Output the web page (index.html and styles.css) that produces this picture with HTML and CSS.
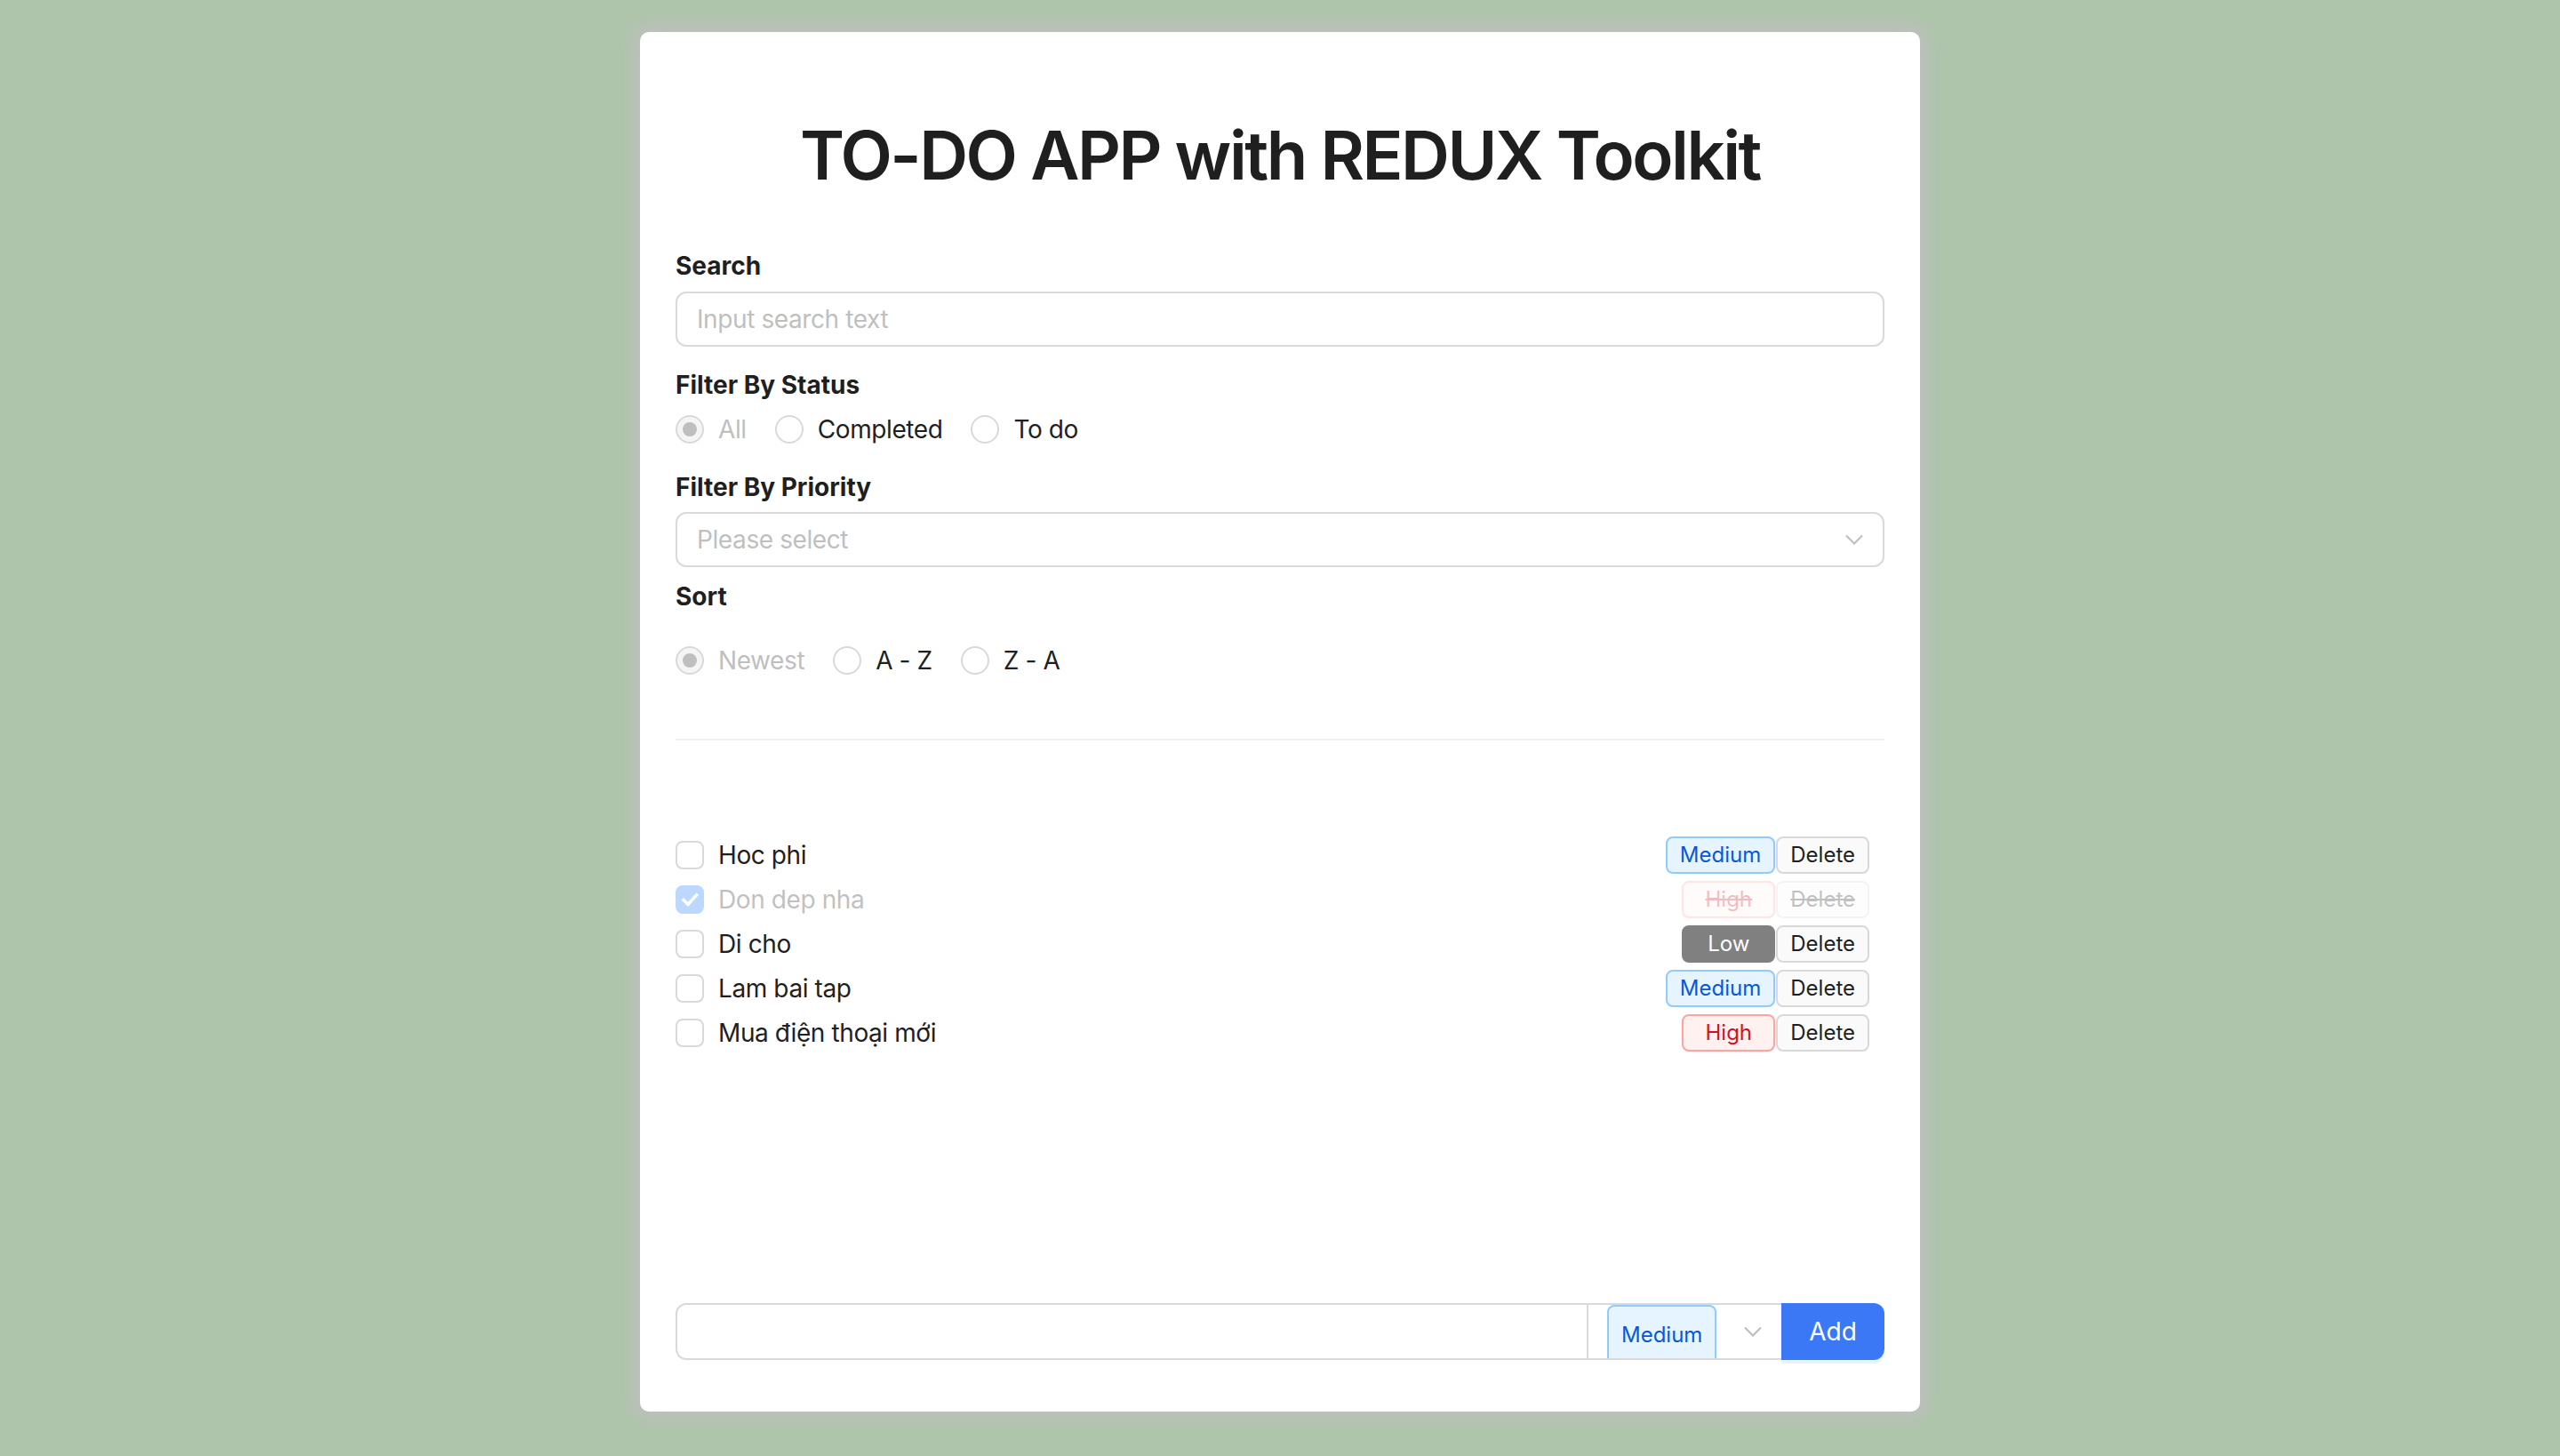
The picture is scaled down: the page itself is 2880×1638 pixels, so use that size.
FILE: index.html
```html
<!DOCTYPE html>
<html lang="vi">
<head>
<meta charset="utf-8">
<title>TO-DO APP with REDUX Toolkit</title>
<link rel="stylesheet" href="styles.css">
</head>
<body>
<main class="card">
  <h1 class="title">TO-DO APP with REDUX Toolkit</h1>

  <p class="label label-first">Search</p>
  <div class="field"><span class="placeholder">Input search text</span></div>

  <p class="label">Filter By Status</p>
  <div class="radio-group">
    <label class="radio disabled checked"><span class="radio-circle"></span><span class="radio-text">All</span></label>
    <label class="radio"><span class="radio-circle"></span><span class="radio-text">Completed</span></label>
    <label class="radio"><span class="radio-circle"></span><span class="radio-text">To do</span></label>
  </div>

  <p class="label">Filter By Priority</p>
  <div class="field field-select">
    <span class="placeholder">Please select</span>
    <svg class="chevron" width="20" height="12" viewBox="0 0 20 12"><path d="M1 1.5 L10 10.5 L19 1.5" fill="none" stroke="#bfbfbf" stroke-width="2.2"/></svg>
  </div>

  <p class="label label-sort">Sort</p>
  <div class="radio-group radio-group-sort">
    <label class="radio disabled checked"><span class="radio-circle"></span><span class="radio-text">Newest</span></label>
    <label class="radio"><span class="radio-circle"></span><span class="radio-text">A - Z</span></label>
    <label class="radio"><span class="radio-circle"></span><span class="radio-text">Z - A</span></label>
  </div>

  <div class="divider"></div>

  <ul class="todo-list">
    <li class="todo">
      <label class="checkbox"><span class="box"></span><span class="todo-text">Hoc phi</span></label>
      <div class="todo-tags"><span class="tag tag-priority tag-medium">Medium</span><span class="tag tag-delete">Delete</span></div>
    </li>
    <li class="todo done">
      <label class="checkbox checked"><span class="box"><svg width="28" height="28" viewBox="0 0 28 28"><path d="M7 14.5 L12 19.5 L21.5 9" fill="none" stroke="#fff" stroke-width="3.6" stroke-linecap="square"/></svg></span><span class="todo-text">Don dep nha</span></label>
      <div class="todo-tags"><span class="tag tag-priority tag-high">High</span><span class="tag tag-delete">Delete</span></div>
    </li>
    <li class="todo">
      <label class="checkbox"><span class="box"></span><span class="todo-text">Di cho</span></label>
      <div class="todo-tags"><span class="tag tag-priority tag-low">Low</span><span class="tag tag-delete">Delete</span></div>
    </li>
    <li class="todo">
      <label class="checkbox"><span class="box"></span><span class="todo-text">Lam bai tap</span></label>
      <div class="todo-tags"><span class="tag tag-priority tag-medium">Medium</span><span class="tag tag-delete">Delete</span></div>
    </li>
    <li class="todo">
      <label class="checkbox"><span class="box"></span><span class="todo-text">Mua điện thoại mới</span></label>
      <div class="todo-tags"><span class="tag tag-priority tag-high">High</span><span class="tag tag-delete">Delete</span></div>
    </li>
  </ul>

  <div class="add-group">
    <div class="add-input"></div>
    <div class="add-select">
      <span class="tag tag-medium add-tag">Medium</span>
      <svg class="chevron add-chevron" width="20" height="12" viewBox="0 0 20 12"><path d="M1 1.5 L10 10.5 L19 1.5" fill="none" stroke="#bfbfbf" stroke-width="2.2"/></svg>
    </div>
    <button class="add-button" type="button">Add</button>
  </div>
</main>
</body>
</html>
```
FILE: styles.css
```css
* {
  box-sizing: border-box;
}

html,
body {
  margin: 0;
}

body {
  height: 1638px;
  padding-top: 36px;
  overflow: hidden;
  background: #aec5ab;
  font-family: Inter, "Noto Sans", "Liberation Sans", sans-serif;
  font-size: 28px;
  letter-spacing: -0.4px;
  color: #1f1f1f;
}

.card {
  width: 1440px;
  height: 1552px;
  margin: 0 auto;
  padding: 40px;
  display: flex;
  flex-direction: column;
  background: #ffffff;
  border-radius: 10px;
  box-shadow: 0 0 20px 8px #bfbfbf;
}

.title {
  margin: 52px 0 0;
  font-size: 76px;
  line-height: 92px;
  font-weight: 600;
  text-align: center;
  letter-spacing: -2.5px;
  color: #1f1f1f;
}

.label {
  margin: 21px 0 0;
  font-weight: 700;
  line-height: 44px;
  letter-spacing: 0;
}

.label-first {
  margin-top: 57px;
}

.label-sort {
  margin-top: 11px;
}

.field {
  margin-top: 6px;
  height: 62px;
  padding: 0 22px;
  display: flex;
  align-items: center;
  border: 2px solid #d9d9d9;
  border-radius: 12px;
}

.label-first + .field {
  margin-top: 7px;
}

.field-select {
  justify-content: space-between;
}

.placeholder {
  color: #bfbfbf;
}

.radio-group {
  margin-top: 6px;
  height: 44px;
  display: flex;
  align-items: center;
}

.radio-group-sort {
  margin-top: 28px;
}

.radio {
  display: flex;
  align-items: center;
  margin-right: 16px;
}

.radio-circle {
  width: 32px;
  height: 32px;
  display: flex;
  align-items: center;
  justify-content: center;
  border: 2px solid #d9d9d9;
  border-radius: 50%;
  background: #ffffff;
}

.radio.disabled .radio-circle {
  background: #f5f5f5;
}

.radio.checked .radio-circle::after {
  content: "";
  width: 16px;
  height: 16px;
  border-radius: 50%;
  background: #bfbfbf;
}

.radio-text {
  padding: 0 16px;
}

.radio.disabled .radio-text {
  color: #bfbfbf;
}

.divider {
  margin-top: 66px;
  height: 2px;
  background: #f0f0f0;
}

.todo-list {
  margin: 107px 0 0;
  padding: 0;
  list-style: none;
}

.todo {
  height: 44px;
  margin-bottom: 6px;
  display: flex;
  align-items: center;
  justify-content: space-between;
}

.todo.done {
  opacity: 0.28;
}

.todo.done .tag {
  text-decoration: line-through;
}

.checkbox {
  display: flex;
  align-items: center;
}

.box {
  width: 32px;
  height: 32px;
  display: flex;
  align-items: center;
  justify-content: center;
  border: 2px solid #d9d9d9;
  border-radius: 8px;
  background: #ffffff;
}

.checkbox.checked .box {
  background: #1677ff;
  border-color: #1677ff;
}

.todo-text {
  padding: 0 16px;
}

.todo-tags {
  display: flex;
  align-items: center;
}

.tag {
  height: 42px;
  padding: 0 14px;
  border: 2px solid #d9d9d9;
  border-radius: 8px;
  font-size: 24px;
  line-height: 38px;
  letter-spacing: 0;
  text-align: center;
  white-space: nowrap;
}

.tag-priority {
  min-width: 105px;
}

.tag-medium {
  background: #e6f4ff;
  border-color: #91caff;
  color: #0958d9;
}

.tag-high {
  background: #fff1f0;
  border-color: #ffa39e;
  color: #cf1322;
}

.tag-low {
  background: #808080;
  border-color: #808080;
  color: #ffffff;
}

.tag-delete {
  margin-left: 1px;
  margin-right: 17px;
  background: #fafafa;
  border-color: #d9d9d9;
  color: #1f1f1f;
}

.add-group {
  margin-top: auto;
  margin-bottom: 18px;
  height: 64px;
  display: flex;
}

.add-input {
  flex: 1;
  border: 2px solid #d9d9d9;
  border-radius: 12px 0 0 12px;
}

.add-select {
  width: 217px;
  padding: 0 22px 0 21px;
  display: flex;
  align-items: flex-start;
  overflow: hidden;
  border-top: 2px solid #d9d9d9;
  border-bottom: 2px solid #d9d9d9;
}

.add-tag {
  height: 80px;
  padding-top: 17px;
  line-height: 29px;
}

.add-chevron {
  margin-left: auto;
  align-self: center;
}

.add-button {
  width: 116px;
  padding: 0;
  border: 0;
  border-radius: 0 12px 12px 0;
  background: #3a78f6;
  box-shadow: 0 4px 0 rgba(5, 145, 255, 0.1);
  font-family: inherit;
  font-size: 28px;
  color: #ffffff;
}
```
